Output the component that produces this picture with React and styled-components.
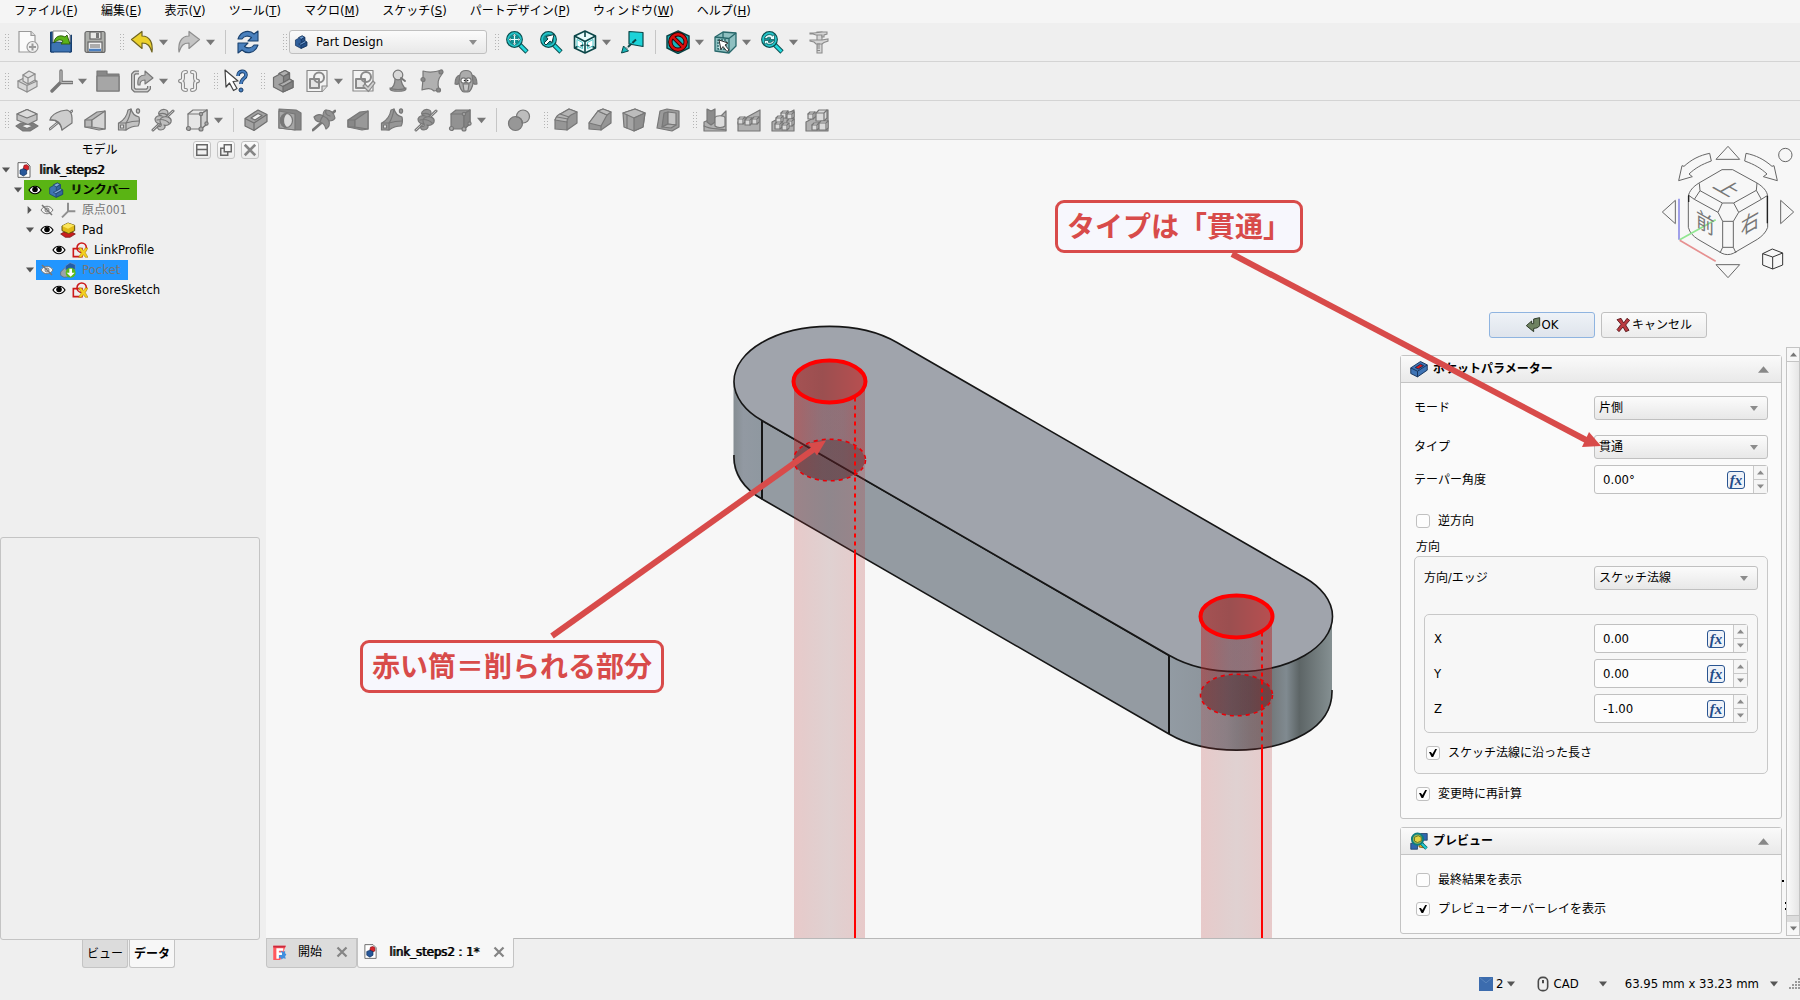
import React, { useState } from "react";
import styled, { createGlobalStyle } from "styled-components";

const GlobalStyle = createGlobalStyle`
  * {
    box-sizing: border-box;
  }
  body {
    margin: 0;
    background: #efefef;
    color: #000;
    font-family: "DejaVu Sans Condensed", "Noto Sans CJK JP", sans-serif;
    font-size: 12px;
    line-height: 16px;
  }
  button, input, select {
    font: inherit;
    color: inherit;
    margin: 0;
  }
  svg {
    display: block;
    flex: none;
  }
`;

const Shell = styled.div`
  display: flex;
  flex-direction: column;
  min-height: 100vh;
`;

const MenuBar = styled.nav`
  display: flex;
  gap: 1px;
  height: 23px;
  padding: 0 3px;
  background: #f5f5f5;
`;

const MenuItem = styled.button`
  border: none;
  background: none;
  padding: 0 11px 2px;
  white-space: nowrap;
`;

const Latin = styled.span`
  font-size: 13px;
`;

const ToolRow = styled.div`
  display: flex;
  align-items: center;
  gap: 3px;
  height: 39px;
  border-bottom: 1px solid #d4d4d4;
`;

const ToolGroup = styled.div`
  display: flex;
  align-items: center;
  margin-left: ${(props) => (props.$spaced ? "10px" : "0")};
`;

const Handle = styled.span`
  width: 10px;
  height: 18px;
  margin-right: ${(props) => (props.$tight ? "1px" : "0")};
  background: radial-gradient(circle, #b4b4b4 1px, transparent 1px) 4px 0 / 3px 3px;
  background-clip: content-box;
  padding-left: 4px;
`;

const ToolButton = styled.button`
  display: flex;
  align-items: center;
  justify-content: center;
  width: 34px;
  height: 34px;
  padding: 0;
  border: none;
  background: none;
`;

const CaretButton = styled.button`
  width: 13px;
  height: 34px;
  padding: 0;
  border: none;
  background: none;
`;

const Separator = styled.span`
  width: 12px;
  height: 24px;
  background: linear-gradient(#c6c6c6, #c6c6c6) center / 1px 100% no-repeat;
`;

const caretImage = (fill) =>
  `url("data:image/svg+xml,%3Csvg xmlns='http://www.w3.org/2000/svg' width='8' height='5'%3E%3Cpath d='M0 0h8L4 5z' fill='%23${fill}'/%3E%3C/svg%3E")`;

const Combo = styled.select`
  appearance: none;
  width: 100%;
  height: 24px;
  padding: 0 24px 0 4px;
  border: 1px solid #c0c0c0;
  border-radius: 3px;
  outline: none;
  background: ${caretImage("8c8c8c")} right 9px center no-repeat,
    linear-gradient(#fbfbfb, #e8e8e8);
`;

const WorkbenchCombo = styled.label`
  display: grid;
  align-items: center;
  width: 198px;

  & > * {
    grid-area: 1 / 1;
  }
  & > svg {
    margin-left: 5px;
    z-index: 1;
    pointer-events: none;
  }
  & > select {
    padding-left: 26px;
    font-size: 13px;
  }
`;

const Main = styled.main`
  flex: 1;
  display: grid;
  grid-template-columns: 266px 1fr;
`;

const Side = styled.aside`
  display: flex;
  flex-direction: column;
`;

const SideTitle = styled.div`
  display: flex;
  align-items: center;
  gap: 6px;
  height: 20px;
  padding: 0 7px 0 12px;

  & > span {
    flex: 1;
    text-align: center;
  }
`;

const TitleButton = styled.button`
  display: flex;
  align-items: center;
  justify-content: center;
  width: 18px;
  height: 18px;
  padding: 0;
  border: 1px solid #c4c4c4;
  border-radius: 3px;
  background: linear-gradient(#fbfbfb, #ececec);
`;

const Tree = styled.ul`
  flex: 1;
  margin: 0;
  padding: 0;
  list-style: none;
`;

const TreeRow = styled.li`
  display: flex;
  align-items: center;
  height: 20px;
  padding-left: ${(props) => props.$level * 12}px;
`;

const Twisty = styled.span`
  display: flex;
  justify-content: center;
  width: 12px;
`;

const TreeLabel = styled.span`
  display: flex;
  align-items: center;
  gap: 7px;
  height: 20px;
  padding: 0 8px 0 4px;
  background: ${(props) => props.$bg || "transparent"};
  color: ${(props) => (props.$dim ? "#777" : "#000")};
  font-size: ${(props) => (props.$jp ? "12px" : "13px")};
  text-shadow: ${(props) => (props.$bold ? "1px 0 currentColor" : "none")};
  white-space: nowrap;

  & > svg + svg {
    margin-left: -1px;
    margin-right: -1px;
  }
`;

const PropertyBox = styled.div`
  height: 403px;
  width: 260px;
  border: 1px solid #c4c4c4;
  border-radius: 3px;
`;

const SideTabs = styled.div`
  display: flex;
  gap: 1px;
  height: 28px;
  padding-left: 82px;
`;

const SideTab = styled.button`
  width: 46px;
  padding: 0;
  border: 1px solid #c4c4c4;
  border-top: none;
  border-radius: 0 0 3px 3px;
  background: ${(props) => (props.$active ? "#f7f7f7" : "#dcdcdc")};
  font-weight: ${(props) => (props.$active ? 700 : 400)};
`;

const Workspace = styled.section`
  display: flex;
  flex-direction: column;
  min-width: 0;
`;

const Viewport = styled.div`
  position: relative;
  flex: 1;
  min-height: 798px;
  overflow: hidden;
  background: #f7f7f7;
`;

const SceneLayer = styled.svg`
  position: absolute;
  inset: 0;
  width: 100%;
  height: 100%;
  pointer-events: none;
`;

const NavCubeSvg = styled.svg`
  position: absolute;
  top: 0;
  right: 0;
`;

const Callout = styled.div`
  position: absolute;
  left: ${(props) => props.$x}px;
  top: ${(props) => props.$y}px;
  padding: 6px 9px 9px;
  border: 3px solid #d84b4a;
  border-radius: 9px;
  background: #f7f7fd;
  color: #d84b4a;
  font-family: "Noto Sans CJK JP", sans-serif;
  font-size: 28px;
  font-weight: 700;
  line-height: 32px;
  white-space: nowrap;
`;

const TaskPanel = styled.form`
  position: absolute;
  top: 172px;
  right: 0;
  bottom: 2px;
  width: 400px;
  display: flex;
  flex-direction: column;
  gap: 9px;
`;

const TaskButtons = styled.div`
  display: flex;
  justify-content: center;
  gap: 6px;
  padding-right: 5px;
`;

const TaskButton = styled.button`
  display: flex;
  align-items: center;
  justify-content: center;
  gap: 1px;
  width: 106px;
  height: 26px;
  padding: 0;
  border: 1px solid ${(props) => (props.$primary ? "#8fb4e0" : "#c0c0c0")};
  border-radius: 3px;
  background: ${(props) =>
    props.$primary
      ? "linear-gradient(#eef2f7, #dfe4ec)"
      : "linear-gradient(#fbfbfb, #ececec)"};
`;

const TaskScroll = styled.div`
  flex: 1;
  display: flex;
  gap: 4px;
`;

const Cards = styled.div`
  flex: 1;
  display: flex;
  flex-direction: column;
  gap: 8px;
  padding-top: 8px;
`;

const Card = styled.section`
  border: 1px solid #c4c4c4;
  border-radius: 3px;
  background: #fafafa;
`;

const CardHeader = styled.h2`
  display: flex;
  align-items: center;
  gap: 5px;
  height: 27px;
  margin: 0;
  padding: 0 12px 0 9px;
  border-bottom: 1px solid #c4c4c4;
  background: linear-gradient(#fafafa, #e9e9e9);
  font-size: 12px;

  & > span {
    flex: 1;
  }
`;

const CardBody = styled.div`
  padding: ${(props) => props.$pad};
`;

const FormRow = styled.div`
  display: flex;
  align-items: center;
  justify-content: space-between;
  margin-top: ${(props) => props.$gap || 0}px;
`;

const Field = styled.div`
  width: ${(props) => props.$width}px;
`;

const CheckLabel = styled.label`
  display: flex;
  align-items: center;
  gap: 8px;
  height: 14px;
  margin-top: ${(props) => props.$gap || 0}px;
  padding-left: 2px;
`;

const CheckBox = styled.input`
  appearance: none;
  width: 14px;
  height: 14px;
  border: 1px solid #c0c0c0;
  border-radius: 3px;
  background: #fdfdfd;

  &:checked::before {
    content: "";
    display: block;
    width: 8px;
    height: 8px;
    margin: 2px;
    background: #000;
    clip-path: polygon(0 38%, 24% 38%, 42% 62%, 78% 0, 100% 0, 52% 100%, 32% 100%);
  }
`;

const GroupTitle = styled.div`
  margin-top: 10px;
  padding-left: 2px;
  line-height: 18px;
`;

const GroupBox = styled.div`
  margin-top: ${(props) => props.$gap}px;
  padding: ${(props) => props.$pad};
  border: 1px solid #c8c8c8;
  border-radius: 5px;
  background: #f7f7f7;
`;

const SpinFrame = styled.div`
  display: flex;
  align-items: center;
  height: 29px;
  border: 1px solid #c0c0c0;
  border-radius: 3px;
  background: #fcfcfc;
`;

const SpinInput = styled.input`
  flex: 1;
  min-width: 0;
  padding: 0 0 0 8px;
  border: none;
  outline: none;
  background: none;
  font-size: 13px;
`;

const FxButton = styled.button`
  width: 18px;
  height: 18px;
  margin-right: 8px;
  padding: 0;
  border: 1px solid #2a5591;
  border-radius: 3px;
  background: #eef2f8;
  color: #1f4b87;
  font-family: "Liberation Serif", serif;
  font-size: 15px;
  font-style: italic;
  font-weight: 700;
  line-height: 14px;
`;

const Steppers = styled.div`
  display: flex;
  flex-direction: column;
  width: 14px;
  height: 27px;
  border-left: 1px solid #c8c8c8;
`;

const Stepper = styled.button`
  flex: 1;
  display: flex;
  align-items: center;
  justify-content: center;
  padding: 0;
  border: none;
  background: #f5f5f5;

  & + & {
    border-top: 1px solid #c8c8c8;
  }
`;

const ScrollBar = styled.div`
  display: flex;
  flex-direction: column;
  width: 14px;
  border: 1px solid #c4c4c4;
  background: #dcdcdc;
`;

const ScrollButton = styled.button`
  display: flex;
  align-items: center;
  justify-content: center;
  height: 13px;
  padding: 0;
  border: none;
  background: #f7f7f7;
`;

const ScrollThumb = styled.div`
  flex: 1;
  margin-bottom: 6px;
  border: solid #c4c4c4;
  border-width: 1px 0;
  background: linear-gradient(90deg, #fafafa, #e6e6e6);
`;

const DocTabs = styled.div`
  display: flex;
  height: 30px;
  background: linear-gradient(#b8b8b8, #b8b8b8) top / 100% 1px no-repeat;
`;

const DocTab = styled.div`
  display: flex;
  align-items: center;
  height: 30px;
  padding: 0 8px 2px 5px;
  border: 1px solid #c4c4c4;
  border-top: ${(props) => (props.$active ? "none" : "1px solid #c4c4c4")};
  border-radius: 0 0 3px 3px;
  background: ${(props) => (props.$active ? "#f7f7f7" : "#dcdcdc")};
  font-size: ${(props) => (props.$active ? "13px" : "12px")};
  text-shadow: ${(props) => (props.$active ? "1px 0 currentColor" : "none")};

  & > span {
    padding: 0 14px 0 11px;
  }
`;

const CloseButton = styled.button`
  padding: 0;
  border: none;
  background: none;
`;

const StatusBar = styled.footer`
  display: flex;
  align-items: center;
  justify-content: flex-end;
  height: 32px;
  font-size: 13px;
`;

const StatusButton = styled.button`
  display: flex;
  align-items: center;
  gap: ${(props) => props.$gap || 3}px;
  padding: 0;
  margin-right: ${(props) => props.$after}px;
  border: none;
  background: none;
  white-space: nowrap;
`;

/* ---- icon drawings, all on a 24 x 24 grid ---- */

const Svg = ({ size = 24, children }) => (
  <svg width={size} height={size} viewBox="0 0 24 24" fill="none" aria-hidden="true">
    {children}
  </svg>
);

const G = (props) => (
  <g stroke="#777" strokeWidth="1.2" strokeLinejoin="round" strokeLinecap="round" {...props} />
);

/* L-shaped block seen from the front left corner */
const bodyShape = (top, front, side, line) => (
  <g stroke={line} strokeWidth="1.2" strokeLinejoin="round">
    <path d="M2.500 8.500L8 5.500V4.500L14 1.500l4.500 2.500v6l3.500 2v6.500L12 23l-9.500-5z" fill={front} />
    <path d="M8 4.500L14 1.500l4.500 2.500-6 3.500z" fill={top} />
    <path d="M12.500 7.500l6-3.500v6l-6 3.500z" fill={side} />
    <path d="M12.500 13.500l6-3.500 3.500 2-10 5.500-4-2z" fill={top} />
    <path d="M12 17.500l10-5.500v6.500L12 23z" fill={side} />
  </g>
);

const magnifier = (
  <g strokeLinejoin="round">
    <path d="M14 14l8 8" stroke="#0b4f50" strokeWidth="4.600" />
    <path d="M14 14l7.500 7.500" stroke="#22d8dc" strokeWidth="2.600" />
    <circle cx="9.500" cy="9.500" r="7.800" fill="#128f92" stroke="#0b4f50" strokeWidth="1.200" />
    <circle cx="9.500" cy="9.500" r="6.400" stroke="#26c6ca" strokeWidth="1.600" />
  </g>
);

const pocketGlyph = (body, inner, line) => (
  <g stroke={line} strokeWidth="1.200" strokeLinejoin="round">
    <path d="M1 10.500L14 2l9 4.500v7L10 22.500l-9-4.500z" fill={body} />
    <path d="M1 10.500l9 4.500 13-8.500M10 15v7.500" />
    <path d="M7 10l7-4.500 4 2-7 4.500z" fill={inner} />
  </g>
);

const pipe = (fill) => (
  <G>
    <path d="M2 15c5-3 8-7 9-13l3-1c1 4 4 7 8 8 1 4 0 8-1 9-4 0-8 1-12 4l-7-1z" fill={fill} />
    <path d="M9 15c3-1 7-2 13-2M9 15c3-4 4-8 5-14" />
    <path d="M1.500 15H9v7H1.500z" fill={fill} />
    <path d="M3.500 17h3v3h-3z" fill="#eee" />
    <ellipse cx="21" cy="3" rx="1.600" ry="2.200" fill={fill} />
  </G>
);

const helix = (fill) => (
  <G>
    <path d="M2 22L22 3" strokeWidth="3" />
    <path d="M2 22L22 3" stroke="#c8c8c8" strokeWidth="1" />
    <path d="M8 4c3-4 9-3 9 1 0 3-3 4-5 4 5-1 9 1 8 5-1 3-5 4-7 3 2 1 1 5-3 5-3 0-4-2-3-4 2 1 4 0 3-2-4 0-6-2-6-5 1-3 4-4 7-3-3-1-4-2-3-4z" fill={fill} />
    <path d="M8 6c3-1 6-1 8 1M6 12c4-1 9 0 12 3M12 9c-3 1-4 4-2 7" />
  </G>
);

const loft = (fill, side) => (
  <G>
    <path d="M2 12L14 4l8-1v18l-6 1-14-3z" fill={fill} />
    <path d="M2 12h7v7H2z" fill={fill} />
    <path d="M9 12l13-9v18L9 19z" fill={side} />
  </G>
);

const primitive = (fill, side) => (
  <G>
    <path d="M3 6l5-4h14v14l-6 5H3z" fill={fill} />
    <path d="M3 6h13v15M16 6l6-4" />
    <path d="M16 6l6-4v14l-6 5z" fill={side} />
    <circle cx="3.500" cy="20.500" r="2" fill="#aaa" />
    <circle cx="16" cy="21" r="2" fill="#aaa" />
    <circle cx="16" cy="6" r="1.600" fill="#aaa" />
    <circle cx="21.500" cy="15.500" r="1.600" fill="#aaa" />
  </G>
);

const groove = (fill) => (
  <G>
    <path d="M1 22L23 3" strokeWidth="2.800" />
    <path d="M2 9c3-3 7-3 9-1 0-3 1-6 3-6 5 0 8 3 9 8-1 2-3 3-6 3 1 3 0 6-3 8-1-4-3-6-6-7-3 0-5-2-6-5z" fill={fill} />
    <path d="M11 8c3 1 5 3 6 5M8 14c1-3 2-5 3-6M14 2c-1 3 0 5 4 6" />
  </G>
);

const patternBase = <path d="M1 23V14L23 2v21z" fill="#b0b0b0" />;

const miniCube = (x, y, s = 5) => {
  const h = Math.round(s / 3);
  return (
    <g key={`${x}-${y}`}>
      <path d={`M${x} ${y + h}l${h}-${h}h${s}v${s}l-${h} ${h}h-${s}z`} fill="#dadada" />
      <path d={`M${x} ${y + h}h${s}v${s}M${x + s} ${y + h}l${h}-${h}`} />
    </g>
  );
};

const icons = {
  newDoc: (
    <g stroke="#9a9a9a" strokeWidth="1.200">
      <path d="M4 1.500h12l4 4V22H4z" fill="#fafafa" />
      <path d="M16 1.500v4h4" fill="#ddd" />
      <circle cx="17.500" cy="17" r="5.500" fill="#f0f0f0" />
      <path d="M17.500 13.500v7M14 17h7" strokeWidth="2" />
    </g>
  ),
  open: (
    <g strokeLinejoin="round">
      <path d="M1.500 2H5v20H1.500zM20 6l2.500-1v17H20z" fill="#1c4d86" stroke="#173f70" />
      <path d="M4 1h13l4 4v9H4z" fill="#fff" stroke="#8a8a8a" />
      <path d="M2 13l6-1 14 1v9H2z" fill="#3d74b4" stroke="#173f70" />
      <path d="M5 13c0-6 6-9 11-6l2-2 3 9h-9l2-3c-3-2-6-1-9 2z" fill="#5cb317" stroke="#2b5a08" strokeWidth="0.900" />
    </g>
  ),
  save: (
    <g stroke="#666" strokeWidth="1.200">
      <rect x="2" y="1.500" width="20" height="21" rx="2" fill="#aeb0ac" />
      <rect x="7" y="2" width="11" height="7" fill="#e8e8e6" />
      <rect x="13" y="3" width="3" height="5" fill="#777" stroke="none" />
      <rect x="5" y="12" width="14" height="10" fill="#f2f2f2" />
      <path d="M7 15h10M7 17h10" strokeWidth="1" />
      <path d="M6 20h12" stroke="#4a7fc0" strokeWidth="2.500" />
    </g>
  ),
  undo: (
    <path d="M1.500 9.500L12 1.500V6c8 0 11 7 10 16-2-6-4-9-10-9v5.500z" fill="#ecd12c" stroke="#6f6420" strokeWidth="1.200" strokeLinejoin="round" />
  ),
  redo: (
    <path d="M22.500 9.500L12 1.500V6C4 6 1 13 2 22c2-6 4-9 10-9v5.500z" fill="#c4c4c4" stroke="#8e8e8e" strokeWidth="1.200" strokeLinejoin="round" />
  ),
  refresh: (
    <g fill="#4a80bd" stroke="#1b426f" strokeWidth="1.100" strokeLinejoin="round">
      <path d="M2 9c3-9 12-9 16-5l4-3v10H12l3.500-3.500C12 5 8 6 6 9z" />
      <path d="M22 15c-3 9-12 9-16 5l-4 3V13h10l-3.500 3.500C12 19 16 18 18 15z" />
    </g>
  ),
  zoomFit: (
    <>
      {magnifier}
      <path d="M9.500 3.500l2 2.500h-4zM9.500 15.500l2-2.500h-4zM3.500 9.500L6 7.500v4zM15.500 9.500L13 7.500v4z" fill="#fff" stroke="#0b4f50" strokeWidth="0.500" />
      <path d="M9.500 6v7M6 9.500h7" stroke="#eaffff" strokeWidth="1.200" />
    </>
  ),
  zoomSel: (
    <>
      {magnifier}
      <path d="M5 13l4-4-2-2.500 8-2-2 8-2-1.500-4 4z" fill="#fff" stroke="#083c3d" strokeWidth="1" />
    </>
  ),
  iso: (
    <g stroke="#0b4648" strokeWidth="1.600" strokeLinejoin="round">
      <path d="M12 1l10.500 5v12L12 23 1.500 18V6z" fill="#e8fbfb" />
      <path d="M1.500 6L12 11.500 22.500 6M12 11.500V23M1.500 18l6-3M22.500 18l-6-3M12 1v6" />
      <path d="M4 9.500l5.500 3v6L4 16zM20 9.500l-5.500 3v6L20 16z" fill="#fff" stroke="#24b9bd" strokeWidth="0.800" />
      <path d="M7.500 16l3-1M16.500 16l-3-1" />
    </g>
  ),
  alignFace: (
    <g stroke="#0b4648" strokeLinejoin="round">
      <path d="M9 1.500l14 1v14L9 14z" fill="#1dd3d8" strokeWidth="1.200" />
      <path d="M16 9.500L7 18" stroke="#0b4648" strokeWidth="2" strokeDasharray="5 1" />
      <path d="M1.500 23l2-7 5 5z" fill="#18b6ba" strokeWidth="1" />
    </g>
  ),
  drawStyle: (
    <>
      <path d="M12 1l11 5v12l-11 5.500L1 18V6z" fill="#17b3b8" stroke="#0b4648" strokeWidth="1.500" />
      <circle cx="12" cy="12" r="7.700" stroke="#300" strokeWidth="4.400" />
      <path d="M6.500 6.500l11 11" stroke="#300" strokeWidth="4" />
      <circle cx="12" cy="12" r="7.700" stroke="#d80f0f" strokeWidth="2.600" />
      <path d="M6.500 6.500l11 11" stroke="#d80f0f" strokeWidth="2.400" />
    </>
  ),
  selection: (
    <g stroke="#27676a" strokeWidth="1.300" strokeLinejoin="round">
      <path d="M2 7l8-5 13 1v13l-7 7-14-2z" fill="#8fc0c1" />
      <path d="M2 7l14 1.500V23M16 8.500L23 3M10 2v6" />
      <path d="M5 10h8v9H5z" fill="#bfe0e0" strokeDasharray="2 1" />
      <path d="M6 10l9 3-3 2 4 5-2 1.500-4-5-2 3z" fill="#fff" stroke="#333" strokeWidth="1" />
    </g>
  ),
  sync: (
    <>
      {magnifier}
      <path d="M4.500 8.500c1-4 6-5 8-2.500l2-1.500v5h-5l1.500-1.500c-2-1.500-3.500-.5-4.500.5zM14.500 10.500c-1 4-6 5-8 2.500l-2 1.500v-4h5L8 12c2 1.500 3.500.5 4.500-1z" fill="#e9ffff" stroke="#0b4f50" strokeWidth="0.700" />
    </>
  ),
  caliper: (
    <g stroke="#8c8c8c" strokeWidth="1.100" fill="#d6d6d6">
      <path d="M10 2h5v21h-5z" />
      <path d="M3 3h4l8-1h5v2l-3 1v2h-2V5H9L6 4H3zM3 10h12l6-1v2l-4 1.500-2 1.500H9l-2-2-4-1z" />
      <path d="M10 14h3M10 16h3M10 18h3M10 20.500h3" />
    </g>
  ),
  part: (
    <G stroke="#8c8c8c">
      <path d="M3 12l6-3 3 1.500 4-2 6 4v5L12 23l-9-4.500z" fill="#d8d8d8" />
      <path d="M3 12l9 4.500V23M12 16.500l10-4.500" />
      <path d="M8 6l6-4 6 3v6l-7 4-5-3z" fill="#e2e2e2" />
      <path d="M8 6l5 3v6M13 9l7-4" />
    </G>
  ),
  axes: (
    <g strokeLinecap="round">
      <path d="M12 2v11l-9 9M12 13.500h11" stroke="#777" strokeWidth="3.400" />
      <path d="M12 2v11M13 13.500h10" stroke="#bdbdbd" strokeWidth="1.200" />
    </g>
  ),
  folder: (
    <G>
      <path d="M1 2h10v3h12v17H1z" fill="#888" />
      <path d="M1 7h22v15H1z" fill="#a6a6a6" />
    </G>
  ),
  link: (
    <g strokeLinejoin="round">
      <path d="M9 3.500H5l-2 2v14l2 2h12l2-2V17" stroke="#777" strokeWidth="4" />
      <path d="M9 3.500H5l-2 2v14l2 2h12l2-2V17" stroke="#d2d2d2" strokeWidth="1.600" />
      <path d="M8 16C7 9 10 6 15 6V2l8 7-8 6v-4c-4 0-5 2-5 5z" fill="#b4b4b4" stroke="#777" strokeWidth="1.100" />
    </g>
  ),
  braces: (
    <g strokeLinejoin="round" strokeLinecap="round">
      <path d="M9 3C5 3 6 5 6 8s0 3-3 4c3 1 3 1 3 4s-1 5 3 5M15 3c4 0 3 2 3 5s0 3 3 4c-3 1-3 1-3 4s1 5-3 5" stroke="#8a8a8a" strokeWidth="4" />
      <path d="M9 3C5 3 6 5 6 8s0 3-3 4c3 1 3 1 3 4s-1 5 3 5M15 3c4 0 3 2 3 5s0 3 3 4c-3 1-3 1-3 4s1 5-3 5" stroke="#f4f4f4" strokeWidth="1.800" />
    </g>
  ),
  whatsThis: (
    <>
      <path d="M14 7c0-6 8-6 8-1 0 4-5 3-5 9" stroke="#173a64" strokeWidth="3.600" />
      <path d="M14 7c0-6 8-6 8-1 0 4-5 3-5 9" stroke="#477fc0" strokeWidth="2" />
      <circle cx="17" cy="21" r="2" fill="#477fc0" stroke="#173a64" />
      <path d="M1 1l13 11-5 .5 4 7-3.500 2-4-7.500-3.500 4z" fill="#fff" stroke="#444" strokeWidth="1.200" strokeLinejoin="round" />
    </>
  ),
  body: bodyShape("#b0b0b0", "#a2a2a2", "#828282", "#6c6c6c"),
  sketch: (
    <G stroke="#8a8a8a">
      <path d="M2 1.500h20V17l-5 5.500H2z" fill="#f3f3f3" />
      <path d="M17 22.500V17h5" fill="#ddd" />
      <path d="M5 10h9v9H5z" strokeWidth="2" fill="#e4e4e4" />
      <circle cx="14" cy="8.500" r="5" strokeWidth="2" />
    </G>
  ),
  sketchCheck: (
    <G stroke="#8a8a8a">
      <path d="M1 1.500h20V22H1z" fill="#f3f3f3" />
      <path d="M4 10h9v9H4z" strokeWidth="2" fill="#e4e4e4" />
      <circle cx="14" cy="8" r="5" strokeWidth="2" />
      <path d="M11 17l2-2 3 3 5-6 2 2-6.500 8.500z" fill="#d2d2d2" />
    </G>
  ),
  pawn: (
    <G>
      <path d="M4 20c4-2 5-7 5-10h6c0 3 2 8 5 10-1 3-15 3-16 0z" fill="#9c9c9c" />
      <circle cx="12" cy="6" r="4.800" fill="#d8d8d8" />
      <path d="M15 9l4 3" strokeWidth="2" />
      <path d="M4 19c3 2 13 2 16 0" />
    </G>
  ),
  surface: (
    <G>
      <path d="M3 2c6 2 13 1 19-1v4c-4 5-5 9-3 16l-5 1c-4-4-8-2-12-1l1-11z" fill="#b0b0b0" />
      <circle cx="3" cy="10.500" r="2" fill="#888" />
      <circle cx="21" cy="3" r="2" fill="#888" />
      <circle cx="18.500" cy="21" r="2" fill="#888" />
    </G>
  ),
  sheep: (
    <G>
      <path d="M6 6C2 7 1 12 1 15c3 1 5-1 6-4zM18 6c4 1 5 6 5 9-3 1-5-1-6-4z" fill="#8a8a8a" />
      <path d="M6 6c1-6 11-6 12 0l1 7c0 5-3 10-5 10h-4c-2 0-5-5-5-10z" fill="#ababab" />
      <path d="M9 15h6l-1 7h-4z" fill="#c8c8c8" />
      <circle cx="9.500" cy="11.500" r="2.600" fill="#fff" />
      <circle cx="14.500" cy="11.500" r="2.600" fill="#fff" />
      <path d="M10.500 11.500h.2M13.500 11.500h.2" stroke="#222" strokeWidth="1.600" />
    </G>
  ),
  pad: (
    <G>
      <path d="M1 18l5-3h12l5 3-8 5H8z" fill="#808080" />
      <path d="M6 18l6-2 6 2-6 2.500z" fill="#eee" />
      <path d="M2 6l10-4.500L22 6v6l-9 4.500L2 12z" fill="#c2c2c2" />
      <path d="M2 6l10 4 10-4-10-4.500z" fill="#dcdcdc" />
    </G>
  ),
  revolution: (
    <G>
      <path d="M1 21L23 3" strokeWidth="2.800" />
      <path d="M1 21L23 3" stroke="#ccc" strokeWidth="1" />
      <path d="M1 12C2 7 7 5 12 3l6-1c3 1 5 4 5 8v5l-10 7c-1-6-5-10-12-10z" fill="#cdcdcd" />
      <path d="M1 12c7-1 11 3 12 10" />
    </G>
  ),
  additiveLoft: loft("#b8b8b8", "#d4d4d4"),
  additivePipe: pipe("#c2c2c2"),
  additiveHelix: helix("#bebebe"),
  additivePrimitive: primitive("#e6e6e6", "#cfcfcf"),
  pocket: pocketGlyph("#a2a2a2", "#f0f0f0", "#6f6f6f"),
  hole: (
    <G>
      <path d="M1 1l17 1 5 3v17H18L1 20z" fill="#858585" />
      <path d="M1 3l16 3v16L1 20z" fill="#a6a6a6" />
      <ellipse cx="8.500" cy="12.500" rx="6" ry="7" fill="#dcdcdc" />
      <path d="M8.500 5.500c-8 1-8 13 0 14-4-3-4-11 0-14z" fill="#777" />
    </G>
  ),
  groove: groove("#929292"),
  subLoft: loft("#888", "#999"),
  subPipe: pipe("#979797"),
  subHelix: helix("#939393"),
  subPrimitive: primitive("#929292", "#858585"),
  boolean: (
    <G>
      <circle cx="16" cy="8.500" r="6.500" fill="#bdbdbd" />
      <circle cx="8.500" cy="15.500" r="7" fill="#979797" />
      <path d="M9.500 9c4 0 6 3 5.500 6" />
    </G>
  ),
  fillet: (
    <G>
      <path d="M1 21v-9c1-3 4-5 7-7l7-4 8 3v11l-10 7z" fill="#969696" />
      <path d="M1 12c1-4 4-6 7-7l7-4 8 3-6 3c-3 2-4 4-4 7z" fill="#b4b4b4" />
      <path d="M13 14v8M3 9l11 2M6 6l9 3" />
    </G>
  ),
  chamfer: (
    <G>
      <path d="M1 21v-6L10 3l5-2 8 3v11l-10 7z" fill="#969696" />
      <path d="M1 15L10 3l9 4-6 11z" fill="#b4b4b4" />
      <path d="M10 3l5-2 8 3-4 3z" fill="#bebebe" />
      <path d="M13 18v4" />
    </G>
  ),
  draft: (
    <G>
      <path d="M1 5l12-4 10 4-2 14-9 4-10-4z" fill="#a4a4a4" />
      <path d="M1 5l12-4 10 4-11 5z" fill="#bcbcbc" />
      <path d="M12 10v13l9-4 2-14z" fill="#8f8f8f" />
      <path d="M5 7v13" />
    </G>
  ),
  thickness: (
    <G>
      <path d="M4 3l7-2 12 2v16l-7 4-15-3z" fill="#9a9a9a" />
      <path d="M8 5l4-1v12l-6 3z" fill="#888" />
      <path d="M12 4l8 1v12l-8-1z" fill="#c4c4c4" />
      <path d="M6 19l6-3 8 1-5 3z" fill="#aaa" />
    </G>
  ),
  mirrored: (
    <G>
      <path d="M1 14l7-3 4 3L23 3v20H1z" fill="#b0b0b0" />
      <path d="M4 1l4 2 4-2v13l-4 3-4-3z" fill="#8c8c8c" />
      <path d="M12 10c0-3 10-3 10 0v8c-2 2-8 2-10 0z" fill="#dcdcdc" />
      <path d="M1 18c7 4 14 2 22 4" />
    </G>
  ),
  linear: (
    <G>
      {patternBase}
      {[[1, 9], [8, 10], [15, 9]].map(([x, y]) => miniCube(x, y))}
    </G>
  ),
  polar: (
    <G>
      {patternBase}
      {[[10, 3], [16, 4], [5, 8], [16, 11], [4, 14], [11, 15]].map(([x, y]) => miniCube(x, y))}
    </G>
  ),
  multi: (
    <G>
      {patternBase}
      {miniCube(3, 4)}
      {miniCube(11, 2, 8)}
      {miniCube(7, 15)}
      {miniCube(14, 13, 7)}
    </G>
  ),
  bodyBlue: bodyShape("#6d9bd0", "#2f5f9c", "#24508a", "#12305a"),
  bodyTree: bodyShape("#7fa9d6", "#3f74b0", "#34679f", "#20486f"),
  docFile: (
    <>
      <path d="M3 1h13l5 5v17H3z" fill="#fff" stroke="#666" strokeWidth="1.500" />
      <path d="M12 5l4-1 3 2v5l-4 2-4-3z" fill="#d8232a" stroke="#7d0c10" />
      <path d="M6 12l5-2 5 2v6l-5 3-5-3z" fill="#27579a" stroke="#0c2a55" />
    </>
  ),
  axesSmall: (
    <path d="M12 1v13L3 23M12 14h11" stroke="#8f8f8f" strokeWidth="3" />
  ),
  padYellow: (
    <g strokeLinejoin="round">
      <path d="M1 18l5-3h12l5 3-8 5H8z" fill="#c81e1e" stroke="#6b0a0a" />
      <path d="M3 6l9-4.500L22 5v8l-9 4.500L3 13z" fill="#e0bb16" stroke="#5a4a08" strokeWidth="1.400" />
      <path d="M3 6l9 4 10-5-10-3.500z" fill="#fbe55a" />
    </g>
  ),
  sketchRed: (
    <>
      <circle cx="14.500" cy="8.500" r="7" stroke="#cc1a1a" strokeWidth="2.400" />
      <path d="M2 10h13v12H2z" stroke="#cc1a1a" strokeWidth="2.400" />
      <path d="M10 9h4l3 4 3-4h4l-4 7 4 7h-4l-3-4-3 4h-4l4-7z" fill="#f4cf1f" stroke="#a97e00" strokeWidth="0.800" />
    </>
  ),
  pocketTip: (
    <>
      <path d="M1 15L8 8l6 2v12l-8 1-5-3z" fill="#9da4a8" stroke="#666" />
      <path d="M8 6l7-5 8 3v7l-9 4-6-4z" fill="#235da6" stroke="#6d97cc" />
      <circle cx="16" cy="16" r="7.500" fill="#5cba1b" />
      <path d="M14 10h4v6h4l-6 6-6-6h4z" fill="#fff" />
    </>
  ),
  pocketBlue: pocketGlyph("#3f74b5", "#d81a1a", "#122f57"),
  preview: (
    <>
      <path d="M14 2h9v9h-9z" fill="#2f66ae" stroke="#17365f" />
      <path d="M1 15h9v8H1z" fill="#2f66ae" stroke="#17365f" />
      <path d="M12 14l6 1v6l-6-1z" fill="#f3b51b" stroke="#6b4d00" />
      <path d="M15 15l7 7" stroke="#0d5f61" strokeWidth="4.500" />
      <path d="M15 15l7 7" stroke="#21cdd1" strokeWidth="2.500" />
      <circle cx="10" cy="9.500" r="7.500" fill="#8fb75a" stroke="#0d7d80" strokeWidth="2.500" />
      <path d="M6 7l5-2 4 2v5l-5 2-4-2z" fill="#e2d442" stroke="#56601a" />
    </>
  ),
  ok: (
    <path d="M13 3l9-2v12c-2 3-5 4-9 4v5L2 13l8-7v4h3z" fill="#6e8261" stroke="#303b29" strokeWidth="1.500" strokeLinejoin="round" />
  ),
  cancel: (
    <path d="M3 4l6-2 4 7 5-7 4 3-6 7 5 8-5 2-4-7-6 7-3-3 6-8z" fill="#bb3a40" stroke="#541317" strokeWidth="1.300" strokeLinejoin="round" />
  ),
  freecad: (
    <>
      <path d="M2 1h20l-3 8v4l-6 11H2z" fill="#ff585d" />
      <path d="M2 1h20l-1 3H2z" fill="#cb2b3e" />
      <path d="M15 9l3 2 3-2v4l2 2-2 3 1 4-4-1-3 2-1-3-4 1 1-4z" fill="#418fde" />
      <path d="M7 5h11v4h-7v3h5v4h-5v6H7z" fill="#fff" />
    </>
  ),
  cube: (
    <>
      <rect width="24" height="24" fill="#3c6cae" />
      <path d="M1 1l11 9L23 1" stroke="#6f97c8" strokeWidth="1" />
    </>
  ),
  mouse: (
    <g stroke="#4a4a4a" strokeWidth="2.400">
      <rect x="5" y="2" width="14" height="20" rx="6" />
      <path d="M12 6v5" strokeWidth="3" />
    </g>
  ),
};

const Icon = ({ name, size }) => <Svg size={size}>{icons[name]}</Svg>;

const Triangle = ({ dir = "down", w = 9, fill = "#777" }) => {
  const points = { down: "0,0 10,0 5,6", up: "0,6 10,6 5,0", right: "2,-2 2,8 7,3" };
  return (
    <svg width={w} height={w} viewBox="0 -2 10 10" aria-hidden="true">
      <polygon points={points[dir]} fill={fill} />
    </svg>
  );
};

const Cross = ({ size = 12 }) => (
  <Svg size={size}>
    <path d="M3 3l18 18M21 3L3 21" stroke="#858585" strokeWidth="4.500" />
  </Svg>
);

const Eye = ({ open }) => (
  <svg width="14" height="12" viewBox="0 0 14 12" fill="none" aria-hidden="true">
    {open ? (
      <g stroke="#000" strokeWidth="1.200">
        <path d="M1 6c3-5 9-5 12 0-3 5-9 5-12 0z" fill="#fff" />
        <circle cx="7" cy="5.500" r="2.200" fill="#000" />
      </g>
    ) : (
      <g stroke="#777" strokeWidth="1">
        <path d="M1 6c3-5 9-5 12 0-3 5-9 5-12 0z" fill="#f3f3f3" />
        <circle cx="7" cy="6" r="2" />
        <path d="M2 1l10 10" strokeWidth="1.600" />
      </g>
    )}
  </svg>
);

/* ---- toolbars ---- */

const toolRows = [
  [
    { items: ["newDoc", "open", "save"] },
    { items: ["undo", "v", "redo", "v", "|", "refresh"] },
    { combo: true },
    {
      items: [
        "zoomFit", "zoomSel", "iso", "v", "alignFace", "|",
        "drawStyle", "v", "selection", "v", "sync", "v", "caliper",
      ],
    },
  ],
  [
    { items: ["part", "axes", "v", "folder", "link", "v", "braces"] },
    { items: ["whatsThis"] },
    { items: ["body", "sketch", "v", "sketchCheck", "pawn", "surface", "sheep"] },
  ],
  [
    {
      items: [
        "pad", "revolution", "additiveLoft", "additivePipe", "additiveHelix",
        "additivePrimitive", "v", "|", "pocket", "hole", "groove", "subLoft",
        "subPipe", "subHelix", "subPrimitive", "v", "|", "boolean",
      ],
    },
    { items: ["fillet", "chamfer", "draft", "thickness"] },
    { items: ["mirrored", "linear", "polar", "multi"] },
  ],
];

const renderTool = (item, index) => {
  if (item === "v") {
    return (
      <CaretButton key={index} type="button" aria-label="メニュー">
        <Triangle />
      </CaretButton>
    );
  }
  if (item === "|") return <Separator key={index} />;
  return (
    <ToolButton key={index} type="button" aria-label={item}>
      <Icon name={item} />
    </ToolButton>
  );
};

const Toolbars = () =>
  toolRows.map((groups, row) => (
    <ToolRow key={row}>
      {groups.map((group, index) => (
        <ToolGroup key={index} $spaced={group.combo}>
          <Handle $tight={group.combo} />
          {group.combo ? (
            <WorkbenchCombo>
              <Icon name="bodyBlue" size={14} />
              <Combo aria-label="ワークベンチ">
                <option>Part Design</option>
              </Combo>
            </WorkbenchCombo>
          ) : (
            group.items.map(renderTool)
          )}
        </ToolGroup>
      ))}
    </ToolRow>
  ));

const menus = [
  ["ファイル", "F"],
  ["編集", "E"],
  ["表示", "V"],
  ["ツール", "T"],
  ["マクロ", "M"],
  ["スケッチ", "S"],
  ["パートデザイン", "P"],
  ["ウィンドウ", "W"],
  ["ヘルプ", "H"],
];

/* ---- model tree ---- */

const treeItems = [
  { level: 0, arrow: "down", icon: "docFile", text: "link_steps2", bold: true },
  { level: 1, arrow: "down", eye: true, icon: "bodyTree", text: "リンクバー", bold: true, jp: true, bg: "#5ab414" },
  { level: 2, arrow: "right", eye: false, icon: "axesSmall", text: "原点001", dim: true, jp: true },
  { level: 2, arrow: "down", eye: true, icon: "padYellow", text: "Pad" },
  { level: 3, eye: true, icon: "sketchRed", text: "LinkProfile" },
  { level: 2, arrow: "down", eye: false, icon: "pocketTip", text: "Pocket", dim: true, bg: "#2196ff" },
  { level: 3, eye: true, icon: "sketchRed", text: "BoreSketch" },
];

const ModelPanel = () => (
  <Side>
    <SideTitle>
      <span>モデル</span>
      <TitleButton type="button" aria-label="自動的に隠す">
        <Svg size={14}>
          <path d="M3 3h18v18H3zM3 11h18" stroke="#666" strokeWidth="2.500" />
        </Svg>
      </TitleButton>
      <TitleButton type="button" aria-label="フロート">
        <Svg size={14}>
          <path d="M9 3h12v12H9zM9 9H3v12h12v-6" stroke="#666" strokeWidth="2.500" />
        </Svg>
      </TitleButton>
      <TitleButton type="button" aria-label="閉じる">
        <Cross size={14} />
      </TitleButton>
    </SideTitle>
    <Tree>
      {treeItems.map((item) => (
        <TreeRow key={item.text} $level={item.level}>
          <Twisty>{item.arrow && <Triangle dir={item.arrow} w={8} fill="#555" />}</Twisty>
          <TreeLabel $bg={item.bg} $dim={item.dim} $bold={item.bold} $jp={item.jp}>
            {"eye" in item && <Eye open={item.eye} />}
            <Icon name={item.icon} size={16} />
            {item.text}
          </TreeLabel>
        </TreeRow>
      ))}
    </Tree>
    <PropertyBox />
    <SideTabs>
      <SideTab type="button">ビュー</SideTab>
      <SideTab type="button" $active>
        データ
      </SideTab>
    </SideTabs>
  </Side>
);

/* ---- 3D view ---- */

const VIEW_BOX = "266 140 1534 798";

const Bore = ({ cx, cy, exit }) => (
  <g transform={`translate(${cx} ${cy})`}>
    <path d="M-35.500 0a35.500 20.500 0 0 0 71 0V560h-71z" fill="url(#tube)" />
    <path d="M-35.500 0a35.500 20.500 0 0 0 71 0V78.500a35.500 20.500 0 0 1 -71 0z" fill="url(#tubeDeep)" />
    <ellipse cy="78.500" rx="35.500" ry="20.500" fill="#30141a" fillOpacity="0.280" />
    <ellipse cy="78.500" rx="36" ry="20.800" stroke="#e80008" strokeWidth="1.600" strokeDasharray="4 4" fill="none" />
    <path d={`M25.500 16V${exit}`} stroke="#f00" strokeWidth="2" strokeDasharray="4 4" />
    <path d={`M25.500 ${exit}V560`} stroke="#f00" strokeWidth="2" />
    <ellipse rx="36" ry="21" fill="url(#boreTop)" stroke="#f00" strokeWidth="4" />
  </g>
);

const Scene = () => (
  <SceneLayer viewBox={VIEW_BOX} preserveAspectRatio="xMidYMid slice" fill="none">
    <defs>
      <linearGradient id="capRight">
        <stop offset="0" stopColor="#929ba3" />
        <stop offset="0.350" stopColor="#8b9299" />
        <stop offset="0.500" stopColor="#7b8084" />
        <stop offset="0.620" stopColor="#727779" />
        <stop offset="0.720" stopColor="#808a90" />
        <stop offset="0.800" stopColor="#5d6566" />
        <stop offset="1" stopColor="#859092" />
      </linearGradient>
      <linearGradient id="capLeft">
        <stop offset="0" stopColor="#858d92" />
        <stop offset="0.350" stopColor="#9299a2" />
        <stop offset="1" stopColor="#8f98a0" />
      </linearGradient>
      <linearGradient id="tube">
        <stop offset="0" stopColor="#b83a3a" stopOpacity="0.240" />
        <stop offset="0.500" stopColor="#7c3030" stopOpacity="0.190" />
        <stop offset="1" stopColor="#b83a3a" stopOpacity="0.240" />
      </linearGradient>
      <linearGradient id="tubeDeep">
        <stop offset="0" stopColor="#b02020" stopOpacity="0.360" />
        <stop offset="0.400" stopColor="#70202a" stopOpacity="0.260" />
        <stop offset="0.700" stopColor="#70202a" stopOpacity="0.260" />
        <stop offset="1" stopColor="#b02020" stopOpacity="0.360" />
      </linearGradient>
      <linearGradient id="boreTop">
        <stop offset="0" stopColor="#a55253" />
        <stop offset="0.400" stopColor="#9b4f50" />
        <stop offset="1" stopColor="#b84f50" />
      </linearGradient>
    </defs>
    <path d="M1782 880h2v2h-2zM1785 902h2v2h-2zM1785 908h2v2h-2z" fill="#000" />
    <g stroke="#161616" strokeWidth="1.600" strokeLinejoin="round">
      <path d="M733.500 381.500V460c0 16 11 30 28.500 39.500V420.500z" fill="url(#capLeft)" stroke="none" />
      <path d="M762 420.500L1169 655.500V734L762 499z" fill="#949ba2" />
      <path
        d="M1169 655.500V734c37 21.500 98 21.500 135.500 0c18-10.500 27.500-24 27.500-39V616.500z"
        fill="url(#capRight)"
        stroke="none"
      />
      <path
        d="M762 420.500a95.500 55.100 0 0 1 135-78L1304.500 577.500a95.500 55.100 0 0 1 -135 78z"
        fill="#a0a4ac"
      />
      <path d="M734 455c-1 18 10 34 28 44M1169 734c37 21.500 98 21.500 135.500 0c19-11 28-25 27.500-44" />
      <path d="M762 420.500V499M1169 655.500V734" strokeWidth="2" />
    </g>
    <Bore cx={829.5} cy={381.5} exit={172} />
    <Bore cx={1236.5} cy={616.5} exit={131} />
  </SceneLayer>
);

const Arrows = () => (
  <SceneLayer viewBox={VIEW_BOX} preserveAspectRatio="xMidYMid slice" fill="#d84b4a">
    <g stroke="#d84b4a" strokeWidth="6">
      <path d="M552 636L814 449" />
      <path d="M1232 254L1586 440" />
    </g>
    <path d="M826 440.500l-18 3 9 12z" />
    <path d="M1601 446l-12-14-7 15z" />
  </SceneLayer>
);

const NavCube = () => (
  <NavCubeSvg width="160" height="150" viewBox="0 30 480 450" fill="none">
    <g stroke="#666" strokeWidth="3" strokeLinejoin="round">
      <path d="M264 49l35 39h-71zM228 404h71l-35 39zM67 246l39-35v70zM422 211l39 35-39 35z" />
      <path d="M209 70c-30 6-54 18-77 39l-6-2-10 45 41-12-10-8c18-17 38-29 67-39z" />
      <path d="M318 70c30 6 54 18 78 39l6-2 10 45-42-12 11-8c-18-17-38-29-67-39z" />
      <circle cx="436" cy="75" r="20" />
      <path d="M246 119h32l73 40c18 11 30 24 32 39v94c-5 15-16 26-31 36l-72 42c-10 5-24 5-34 0l-72-42c-15-10-25-20-29-36v-94c3-15 14-28 32-39z" />
      <path d="M178 160l2 22 67 37h34l68-38 2-22M163 208l17-26M163 208l-17-12M163 208l71 39 13-28M281 219l15 28 68-39-15-27M364 208l19-12M234 247l14 27h32l16-27M248 274v78h32v-78M248 352l-8 17M280 352l8 17" />
      <path d="M368 371l29-14 31 12v36l-30 12-30-12zM368 371l30 10 30-12M398 381v36" stroke="#333" />
    </g>
    <path d="M146 196v20M382 198v82" stroke="#222" strokeWidth="4" />
    <path d="M117 329V206" stroke="#8f8fe6" strokeWidth="5" />
    <path d="M119 329l108-60" stroke="#90e690" strokeWidth="5" />
    <path d="M119 331l108 63" stroke="#e69090" strokeWidth="5" />
    <g fill="#777" fontFamily="Noto Sans CJK JP" fontSize="64" textAnchor="middle">
      <text transform="matrix(0.87 0.5 -0.87 0.5 243 186)">上</text>
      <text transform="matrix(0.87 0.5 0 1 196 302)">前</text>
      <text transform="matrix(0.87 -0.5 0 1 330 302)">右</text>
    </g>
  </NavCubeSvg>
);

/* ---- task panel ---- */

const SpinBox = ({ id, initial }) => {
  const [value, setValue] = useState(initial);

  return (
    <SpinFrame>
      <SpinInput id={id} type="text" value={value} onChange={(event) => setValue(event.target.value)} />
      <FxButton type="button" aria-label="数式">
        fx
      </FxButton>
      <Steppers>
        <Stepper type="button" aria-label="増やす">
          <Triangle dir="up" w={7} fill="#8a8a8a" />
        </Stepper>
        <Stepper type="button" aria-label="減らす">
          <Triangle w={7} fill="#8a8a8a" />
        </Stepper>
      </Steppers>
    </SpinFrame>
  );
};

const Check = ({ gap, checked, children }) => (
  <CheckLabel $gap={gap}>
    <CheckBox type="checkbox" defaultChecked={checked} />
    {children}
  </CheckLabel>
);

const Choice = ({ id, label, value, width, gap }) => (
  <FormRow $gap={gap}>
    <label htmlFor={id}>{label}</label>
    <Field $width={width}>
      <Combo id={id}>
        <option>{value}</option>
      </Combo>
    </Field>
  </FormRow>
);

const Quantity = ({ id, label, value, width, gap }) => (
  <FormRow $gap={gap}>
    <label htmlFor={id}>{label}</label>
    <Field $width={width}>
      <SpinBox id={id} initial={value} />
    </Field>
  </FormRow>
);

const PocketTask = () => (
  <TaskPanel onSubmit={(event) => event.preventDefault()}>
    <TaskButtons>
      <TaskButton type="submit" $primary>
        <Icon name="ok" size={16} />
        <Latin>OK</Latin>
      </TaskButton>
      <TaskButton type="button">
        <Icon name="cancel" size={16} />
        キャンセル
      </TaskButton>
    </TaskButtons>
    <TaskScroll>
      <Cards>
        <Card>
          <CardHeader>
            <Icon name="pocketBlue" size={18} />
            <span>ポケットパラメーター</span>
            <Triangle dir="up" w={11} fill="#888" />
          </CardHeader>
          <CardBody $pad="13px 13px 17px">
            <Choice id="mode" label="モード" value="片側" width={174} />
            <Choice id="type" label="タイプ" value="貫通" width={174} gap={15} />
            <Quantity id="taper" label="テーパー角度" value="0.00°" width={174} gap={6} />
            <Check gap={20}>逆方向</Check>
            <GroupTitle>方向</GroupTitle>
            <GroupBox $gap={0} $pad="9px 9px 13px">
              <Choice id="edge" label="方向/エッジ" value="スケッチ法線" width={164} />
              <GroupBox $gap={24} $pad="9px">
                <Quantity id="x" label={<Latin>X</Latin>} value="0.00" width={154} />
                <Quantity id="y" label={<Latin>Y</Latin>} value="0.00" width={154} gap={6} />
                <Quantity id="z" label={<Latin>Z</Latin>} value="-1.00" width={154} gap={6} />
              </GroupBox>
              <Check gap={13} checked>
                スケッチ法線に沿った長さ
              </Check>
            </GroupBox>
            <Check gap={13} checked>
              変更時に再計算
            </Check>
          </CardBody>
        </Card>
        <Card>
          <CardHeader>
            <Icon name="preview" size={18} />
            <span>プレビュー</span>
            <Triangle dir="up" w={11} fill="#888" />
          </CardHeader>
          <CardBody $pad="18px 13px 17px">
            <Check>最終結果を表示</Check>
            <Check gap={15} checked>
              プレビューオーバーレイを表示
            </Check>
          </CardBody>
        </Card>
      </Cards>
      <ScrollBar>
        <ScrollButton type="button" aria-label="上へ">
          <Triangle dir="up" w={7} />
        </ScrollButton>
        <ScrollThumb />
        <ScrollButton type="button" aria-label="下へ">
          <Triangle w={7} />
        </ScrollButton>
      </ScrollBar>
    </TaskScroll>
  </TaskPanel>
);

const App = () => (
  <Shell>
    <GlobalStyle />
    <MenuBar>
      {menus.map(([label, key]) => (
        <MenuItem key={key} type="button">
          {label}
          <Latin>
            (<u>{key}</u>)
          </Latin>
        </MenuItem>
      ))}
    </MenuBar>
    <Toolbars />
    <Main>
      <ModelPanel />
      <Workspace>
        <Viewport>
          <Scene />
          <NavCube />
          <PocketTask />
          <Callout $x={789} $y={60}>
            タイプは「貫通」
          </Callout>
          <Callout $x={94} $y={500}>
            赤い筒＝削られる部分
          </Callout>
          <Arrows />
        </Viewport>
        <DocTabs>
          <DocTab>
            <Icon name="freecad" size={15} />
            <span>開始</span>
            <CloseButton type="button" aria-label="閉じる">
              <Cross />
            </CloseButton>
          </DocTab>
          <DocTab $active>
            <Icon name="docFile" size={15} />
            <span>link_steps2 : 1*</span>
            <CloseButton type="button" aria-label="閉じる">
              <Cross />
            </CloseButton>
          </DocTab>
        </DocTabs>
      </Workspace>
    </Main>
    <StatusBar>
      <StatusButton type="button" $after={20}>
        <Icon name="cube" size={14} />2
        <Triangle w={8} fill="#555" />
      </StatusButton>
      <StatusButton type="button" $after={20}>
        <Icon name="mouse" size={16} />
        CAD
      </StatusButton>
      <StatusButton type="button" $after={18} aria-label="ナビゲーション">
        <Triangle w={8} fill="#555" />
      </StatusButton>
      <StatusButton type="button" $gap={11} $after={10}>
        63.95 mm x 33.23 mm
        <Triangle w={8} fill="#555" />
      </StatusButton>
      <svg width="12" height="12" viewBox="0 0 12 12" fill="#999" aria-hidden="true">
        <path d="M10 0h2v2h-2zM7 3h2v2H7zM10 3h2v2h-2zM4 6h2v2H4zM7 6h2v2H7zM10 6h2v2h-2zM1 9h2v2H1zM4 9h2v2H4zM7 9h2v2H7zM10 9h2v2h-2z" />
      </svg>
    </StatusBar>
  </Shell>
);

export default App;
